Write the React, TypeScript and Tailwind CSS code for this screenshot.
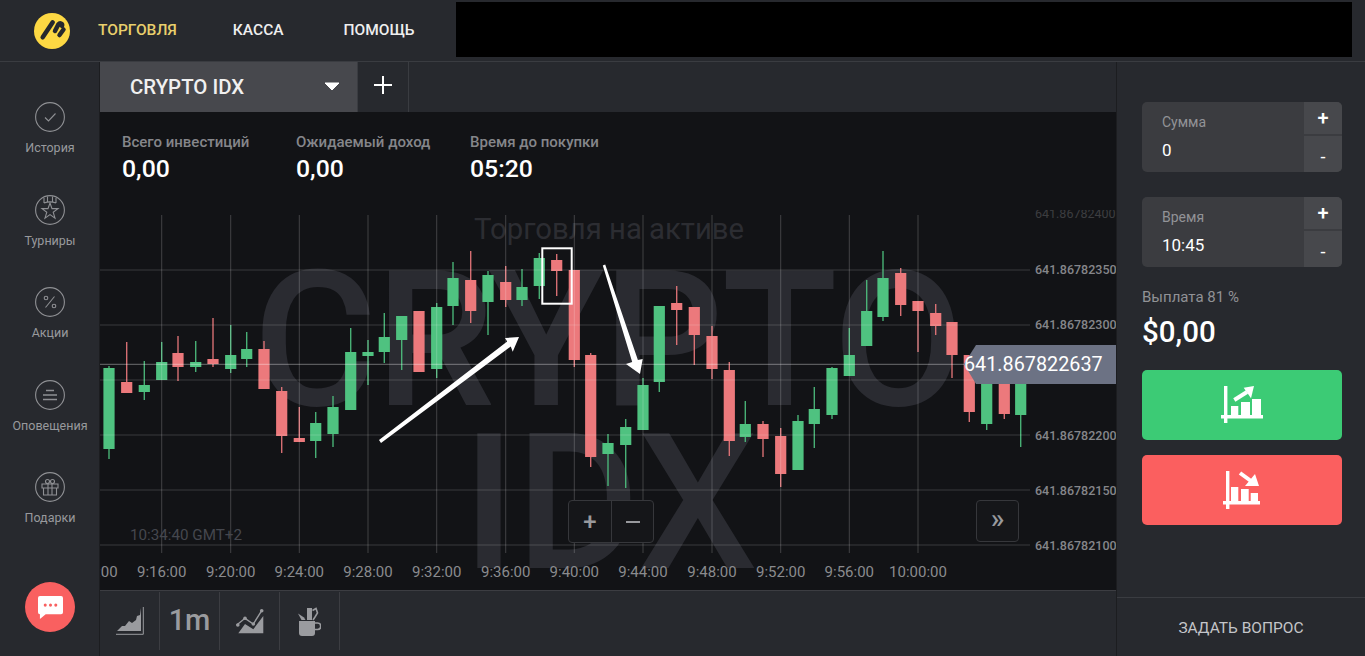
import React from "react";

// x, color, wick top, wick bottom, body top, body bottom
const candles: [number, "g" | "r", number, number, number, number][] = [
  [109, "g", 366, 459, 368, 449],
  [126.7, "r", 342, 393, 382, 393],
  [144.3, "g", 361, 400, 385, 392],
  [161.7, "g", 342, 380, 362, 380],
  [178, "r", 336, 381, 353, 367],
  [195.7, "g", 341, 372, 362, 367],
  [213, "r", 318, 367, 359, 364],
  [230.7, "g", 325, 373, 355, 369],
  [246.7, "g", 332, 367, 349, 359],
  [264, "r", 341, 389, 349, 389],
  [281.7, "r", 387, 453, 391, 436],
  [299.3, "r", 407, 442, 438, 442],
  [315.7, "g", 412, 458, 423, 441],
  [333, "g", 396, 447, 407, 434],
  [350.7, "g", 328, 410, 352, 410],
  [368, "g", 340, 385, 352, 356],
  [384.3, "g", 313, 363, 337, 352],
  [401.7, "g", 316, 370, 316, 340],
  [419, "r", 311, 372, 311, 372],
  [436.7, "g", 303, 378, 307, 369],
  [453, "g", 262, 325, 278, 306],
  [470.7, "r", 251, 323, 280, 311],
  [488, "g", 271, 335, 275, 302],
  [505.7, "r", 266, 307, 282, 300],
  [522, "g", 269, 306, 287, 300],
  [539.3, "g", 253, 299, 258, 286],
  [556.7, "r", 254, 296, 260, 271],
  [574.3, "r", 270, 367, 270, 360],
  [590.7, "r", 353, 467, 355, 457],
  [608, "g", 434, 486, 443, 454],
  [625.7, "g", 419, 488, 427, 445],
  [643, "g", 378, 430, 385, 430],
  [659.3, "g", 306, 392, 306, 382],
  [676.7, "r", 286, 345, 303, 310],
  [694.3, "r", 307, 365, 307, 335],
  [712, "r", 326, 379, 336, 369],
  [729.3, "r", 362, 456, 370, 441],
  [745.3, "g", 401, 442, 424, 437],
  [763, "r", 421, 457, 424, 439],
  [780.7, "r", 428, 487, 436, 474],
  [798, "g", 415, 470, 421, 470],
  [814.3, "g", 387, 448, 409, 424],
  [832, "g", 367, 419, 368, 415],
  [849.3, "g", 328, 376, 355, 376],
  [866.7, "g", 280, 346, 311, 346],
  [883, "g", 251, 321, 278, 317],
  [900.7, "r", 268, 316, 273, 305],
  [918, "r", 301, 352, 301, 311],
  [935.7, "r", 304, 335, 313, 326],
  [952, "r", 322, 378, 322, 355],
  [969.3, "r", 355, 422, 355, 412],
  [986.7, "g", 375, 430, 375, 424],
  [1004.3, "r", 375, 419, 375, 414],
  [1020.7, "g", 375, 447, 375, 415],
];

const vLines = [161.7, 230.7, 299.3, 368, 436.7, 505.7, 574.3, 643, 712, 780.7, 849.3, 918];
const hLines = [270, 325, 380, 435, 490, 545];
const times = ["9:16:00", "9:20:00", "9:24:00", "9:28:00", "9:32:00", "9:36:00", "9:40:00", "9:44:00", "9:48:00", "9:52:00", "9:56:00", "10:00:00"];
const prices = ["641.86782350", "641.86782300", "641.86782250", "641.86782200", "641.86782150", "641.86782100"];

const Chart = () => (
  <svg viewBox="100 210 1016 380" className="block w-[1016px] h-[380px]" fontFamily="Roboto, sans-serif">
    <text x="253" y="405" fontSize="190" fontWeight="500" fill="#2a2b31" textLength="711" lengthAdjust="spacing">CRYPTO</text>
    <text x="462" y="568" fontSize="190" fontWeight="500" fill="#2a2b31">IDX</text>
    <text x="474" y="239" fontSize="29.3" fill="#2c2d32">Торговля на активе</text>
    {candles.map(([x, c, wt, wb, bt, bb], i) => (
      <g key={i} fill={c === "g" ? "#4fc280" : "#ec797c"}>
        <rect x={x - 0.7} y={wt} width="1.4" height={wb - wt} opacity="0.9" />
        <rect x={x - 5.6} y={bt} width="11.2" height={bb - bt} />
      </g>
    ))}
    {hLines.map((y) => (
      <rect key={y} x="100" y={y - 0.5} width="930" height="1" fill="#ffffff" opacity="0.17" />
    ))}
    <rect x="100" y="363.8" width="1016" height="1" fill="#ffffff" opacity="0.38" />
    {vLines.map((x) => (
      <rect key={x} x={x - 0.5} y="215" width="1" height="338" fill="#ffffff" opacity="0.2" />
    ))}
    {times.map((t, i) => (
      <text key={t} x={vLines[i]} y="577" fontSize="15" fill="#8a8b8e" textAnchor="middle">{t}</text>
    ))}
    <text x="93" y="577" fontSize="15" fill="#8a8b8e" textAnchor="middle">9:12:00</text>
    <text x="1035" y="218" fontSize="12.5" fill="#8a8b8e" opacity="0.35">641.86782400</text>
    {prices.map((p, i) => (
      <text key={p} x="1035" y={274 + i * 55.2} fontSize="12.5" fontWeight="500" fill="#85868a">{p}</text>
    ))}
    <text x="130" y="540" fontSize="15.2" fill="#45474e">10:34:40 GMT+2</text>
    <path d="M964 364 976 345H1116V384H976Z" fill="#6c7284" />
    <text x="964" y="371" fontSize="19.8" fill="#ffffff">641.867822637</text>
    <rect x="542.3" y="248.3" width="29.4" height="55.4" fill="none" stroke="#ffffff" strokeWidth="2" />
    <path d="M379 440 507.2 341.6 505 338 519 337 512.7 351.7 510.8 346.4 381 443Z" fill="#ffffff" />
    <path d="M602.8 265.5 632.2 362 626 364 640 374 642.7 359 637.9 360 605.2 264.5Z" fill="#ffffff" />
  </svg>
);

const SideIcon = ({ children }: { children: React.ReactNode }) => (
  <svg viewBox="0 0 30 30" className="w-[30px] h-[30px]" fill="none" stroke="#8f9094" strokeWidth="1.1">
    <circle cx="15" cy="15" r="14.4" />
    {children}
  </svg>
);

const sideItems = [
  { label: "История", icon: <path d="M10 15.5l3.5 3.5 7-7.5" /> },
  {
    label: "Турниры",
    icon: (
      <>
        <path d="M15 8l2 5.6h6l-4.8 3.600 1.800 6-5-3.600-5 3.600 1.800-6-4.800-3.600h6z" />
        <path d="M9 8V3M12.5 7V1.5M17.5 7V1.5M21 8V3M9 8c4-1.500 8-1.500 12 0" />
      </>
    ),
  },
  {
    label: "Акции",
    icon: (
      <>
        <path d="M19.5 9.5l-9 11" />
        <circle cx="11" cy="11" r="1.8" />
        <circle cx="19" cy="19" r="1.8" />
      </>
    ),
  },
  { label: "Оповещения", icon: <path d="M11 10.5h8M8 15h14M8 19.5h14" strokeWidth="1.4" /> },
  {
    label: "Подарки",
    icon: (
      <>
        <path d="M7 12h16v4H7zM8.5 16v7h13v-7M13 12v11M17 12v11" />
        <circle cx="12.5" cy="9.5" r="2" />
        <circle cx="17.5" cy="9.5" r="2" />
      </>
    ),
  },
];

const Stepper = ({ label, value }: { label: string; value: string }) => (
  <div className="flex h-[70px] w-[200px] rounded-[5px] overflow-hidden bg-[#3b3c40]">
    <div className="flex-1 pl-5 pt-[10px]">
      <p className="text-[14px] leading-[20px] text-[#929397]">{label}</p>
      <p className="mt-[8px] text-[17px] leading-[20px] text-white">{value}</p>
    </div>
    <div className="w-[38px] flex flex-col gap-[2px]">
      <div className="flex-1 bg-[#47484c] flex items-center justify-center text-[20px] font-medium text-white">+</div>
      <div className="flex-1 bg-[#47484c] flex items-center justify-center text-[18px] text-white pt-[4px]">-</div>
    </div>
  </div>
);

const ToolCell = ({ children }: { children: React.ReactNode }) => (
  <div className="w-[60px] h-[58px] border-r border-[#3c3d42] flex items-center justify-center">{children}</div>
);

export default function App() {
  return (
    <div className="w-[1365px] h-[656px] overflow-hidden flex flex-col bg-[#27292e] font-['Roboto',sans-serif]">
      <header className="h-[62px] shrink-0 flex items-center border-b border-[#3a3c41]">
        <svg viewBox="0 0 36 36" className="ml-[34px] w-[36px] h-[36px]">
          <circle cx="18" cy="18" r="18" fill="#fdd843" />
          <path d="M8.7 24.3 18.7 9.300M21 18 24.300 11.500C26 9.500 29 10.500 28 13M25.500 22 29.500 16.500" stroke="#26282d" strokeWidth="4.5" strokeLinecap="round" strokeLinejoin="round" fill="none" />
        </svg>
        <nav className="ml-[28px] mt-[1px] flex text-[15.5px] font-medium text-[#eeeeee]">
          <a className="text-[#e9cf6c]">ТОРГОВЛЯ</a>
          <a className="ml-[56px]">КАССА</a>
          <a className="ml-[60px]">ПОМОЩЬ</a>
        </nav>
        <div className="ml-[42px] w-[896px] h-[55px] bg-black self-start mt-[2px]" />
      </header>
      <div className="flex flex-1 min-h-0">
        <aside className="w-[100px] shrink-0 flex flex-col items-center pl-[1px] pt-[40px] border-r border-[#1c1d20]">
          {sideItems.map((item) => (
            <div key={item.label} className="h-[92.5px] flex flex-col items-center">
              <SideIcon>{item.icon}</SideIcon>
              <span className="mt-[7px] text-[12.5px] leading-[18px] text-[#98999d]">{item.label}</span>
            </div>
          ))}
          <div className="mt-auto mb-[24px] w-[50px] h-[50px] rounded-full bg-[#f96060] flex items-center justify-center">
            <svg viewBox="0 0 28 26" className="w-[27px] h-[25px]">
              <path d="M3 1h22a2 2 0 0 1 2 2v15a2 2 0 0 1-2 2H9l-6 5v-5a2 2 0 0 1-2-2V3a2 2 0 0 1 2-2z" fill="#ffffff" />
              <circle cx="8.5" cy="10.5" r="1.6" fill="#f96060" />
              <circle cx="14" cy="10.5" r="1.6" fill="#f96060" />
              <circle cx="19.5" cy="10.5" r="1.6" fill="#f96060" />
            </svg>
          </div>
        </aside>
        <main className="w-[1016px] shrink-0 flex flex-col">
          <div className="h-[50px] shrink-0 flex">
            <div className="w-[258px] bg-[#47484d] flex items-center pl-[30px] pr-[18px] justify-between">
              <span className="text-[20.4px] font-medium text-[#f0f0f0]">CRYPTO IDX</span>
              <svg viewBox="0 0 16 9" className="w-[16px] h-[9px] mt-[-1px]">
                <path d="M1 1h14L8 8z" fill="#ffffff" stroke="#ffffff" strokeLinejoin="round" />
              </svg>
            </div>
            <div className="w-[52px] border-l border-r border-[#3a3c41] ml-[-1px] flex items-center justify-center">
              <svg viewBox="0 0 18 18" className="w-[18px] h-[18px] mt-[-4px]">
                <path d="M9 0v18M0 9h18" stroke="#ffffff" strokeWidth="2" />
              </svg>
            </div>
          </div>
          <div className="relative flex-1 bg-[#121316] min-h-0 flex flex-col">
            <div className="h-[98px] shrink-0 flex pl-[22px] pt-[20px]">
              {[["Всего инвестиций", "0,00"], ["Ожидаемый доход", "0,00"], ["Время до покупки", "05:20"]].map(([a, b]) => (
                <div key={a} className="w-[174px]">
                  <p className="text-[15px] leading-[20px] font-medium text-[#85868a]">{a}</p>
                  <p className="mt-[2px] text-[24.8px] leading-[30px] font-medium text-white">{b}</p>
                </div>
              ))}
            </div>
            <Chart />
            <div className="absolute left-[468px] bottom-[47px] h-[43px] flex rounded-[4px] border border-[#36373b] bg-[#151619] text-[#98999d]">
              <div className="w-[43px] flex items-center justify-center border-r border-[#36373b] text-[24px] font-medium">+</div>
              <div className="w-[41px] flex items-center justify-center">
                <div className="w-[14px] h-[2px] bg-[#98999d]" />
              </div>
            </div>
            <div className="absolute left-[876px] bottom-[48px] w-[43px] h-[42px] rounded-[4px] border border-[#36373b] bg-[#151619] flex items-center justify-center text-[28px] font-medium leading-none text-[#98999d] pb-[5px]">»</div>
          </div>
          <div className="h-[66px] shrink-0 border-t border-[#3c3d42] flex items-start pt-[1px]">
            <ToolCell>
              <svg viewBox="0 0 28 28" className="w-[28px] h-[28px]" fill="#9a9b9f">
                <path d="M1 24 6 19l3 0 4-5 3 2 4-3 1-4 3-1 1-7v23z" />
                <path d="M0 27.3h27.3V0" fill="none" stroke="#9a9b9f" strokeWidth="1" />
              </svg>
            </ToolCell>
            <ToolCell>
              <span className="text-[29px] font-medium text-[#9a9b9f] mt-[-1px]">1m</span>
            </ToolCell>
            <ToolCell>
              <svg viewBox="0 0 28 26" className="w-[28px] h-[26px]" fill="#9a9b9f">
                <path d="M2.3 25.3 9 16l8.3 5.300 10-13.300v17.300z" />
                <path d="M.7 17 9 10.300l8.300 5.700 8.400-13.300" fill="none" stroke="#9a9b9f" strokeWidth="1.4" />
                <circle cx="1.8" cy="17" r="1.8" />
                <circle cx="9" cy="10.3" r="1.8" />
                <circle cx="17.3" cy="16" r="1.8" />
                <circle cx="25.7" cy="2.7" r="1.8" />
              </svg>
            </ToolCell>
            <ToolCell>
              <svg viewBox="0 0 23 29" className="w-[23px] h-[29px]" fill="#9a9b9f">
                <path d="M1 14h16v12a3 3 0 0 1-3 3H4a3 3 0 0 1-3-3z" />
                <path d="M17 16h2.5a2.700 2.700 0 0 1 0 6.500H17" fill="none" stroke="#9a9b9f" strokeWidth="1.6" />
                <path d="M9 1h5v12H9z" />
                <path d="M0 6.5 6 10.500 7.500 13H3.500z" />
                <path d="M14.5 3.5 18 1.500 19.500 6 17 10 15 13" fill="none" stroke="#9a9b9f" strokeWidth="1.6" />
              </svg>
            </ToolCell>
          </div>
        </main>
        <aside className="flex-1 border-l border-[#1c1d20] flex flex-col pl-[25px]">
          <div className="mt-[40px]">
            <Stepper label="Сумма" value="0" />
          </div>
          <div className="mt-[25px]">
            <Stepper label="Время" value="10:45" />
          </div>
          <p className="mt-[21px] text-[15px] leading-[18px] text-[#919296]">Выплата 81 %</p>
          <p className="mt-[8px] text-[29.5px] leading-[36px] font-medium text-white">$0,00</p>
          <div className="mt-[20px] w-[200px] h-[70px] rounded-[5px] bg-[#3ccb75] flex items-center justify-center">
            <svg viewBox="0 0 42 38" className="w-[42px] h-[38px]" fill="#ffffff">
              <path d="M3 0h3.400v37H3zM0 29h42v3.400H0zM10 20h7.300v9H10zM20 16h9v13h-9zM31 13h9v16h-9z" />
              <path d="M13.300 14 26 6" stroke="#ffffff" strokeWidth="4" />
              <path d="M33 0 22.700 1.700 30 12.300z" />
            </svg>
          </div>
          <div className="mt-[15px] w-[200px] h-[70px] rounded-[5px] bg-[#fb5f5f] flex items-center justify-center">
            <svg viewBox="0 0 38 38" className="w-[38px] h-[38px]" fill="#ffffff">
              <path d="M3 0h3.400v38H3zM0 30h37v3.400H0zM8 16h7.300v14H8zM18 18h7.700v12H18zM27.700 22H35v8h-7.300z" />
              <path d="M17 2 28 10" stroke="#ffffff" strokeWidth="4" />
              <path d="M36 15H22l10-12z" />
            </svg>
          </div>
          <div className="mt-auto ml-[-25px] h-[59px] pt-[3px] border-t border-[#3a3c41] flex items-center justify-center text-[15.5px] text-[#c4c5c9]">
            ЗАДАТЬ ВОПРОС
          </div>
        </aside>
      </div>
    </div>
  );
}
